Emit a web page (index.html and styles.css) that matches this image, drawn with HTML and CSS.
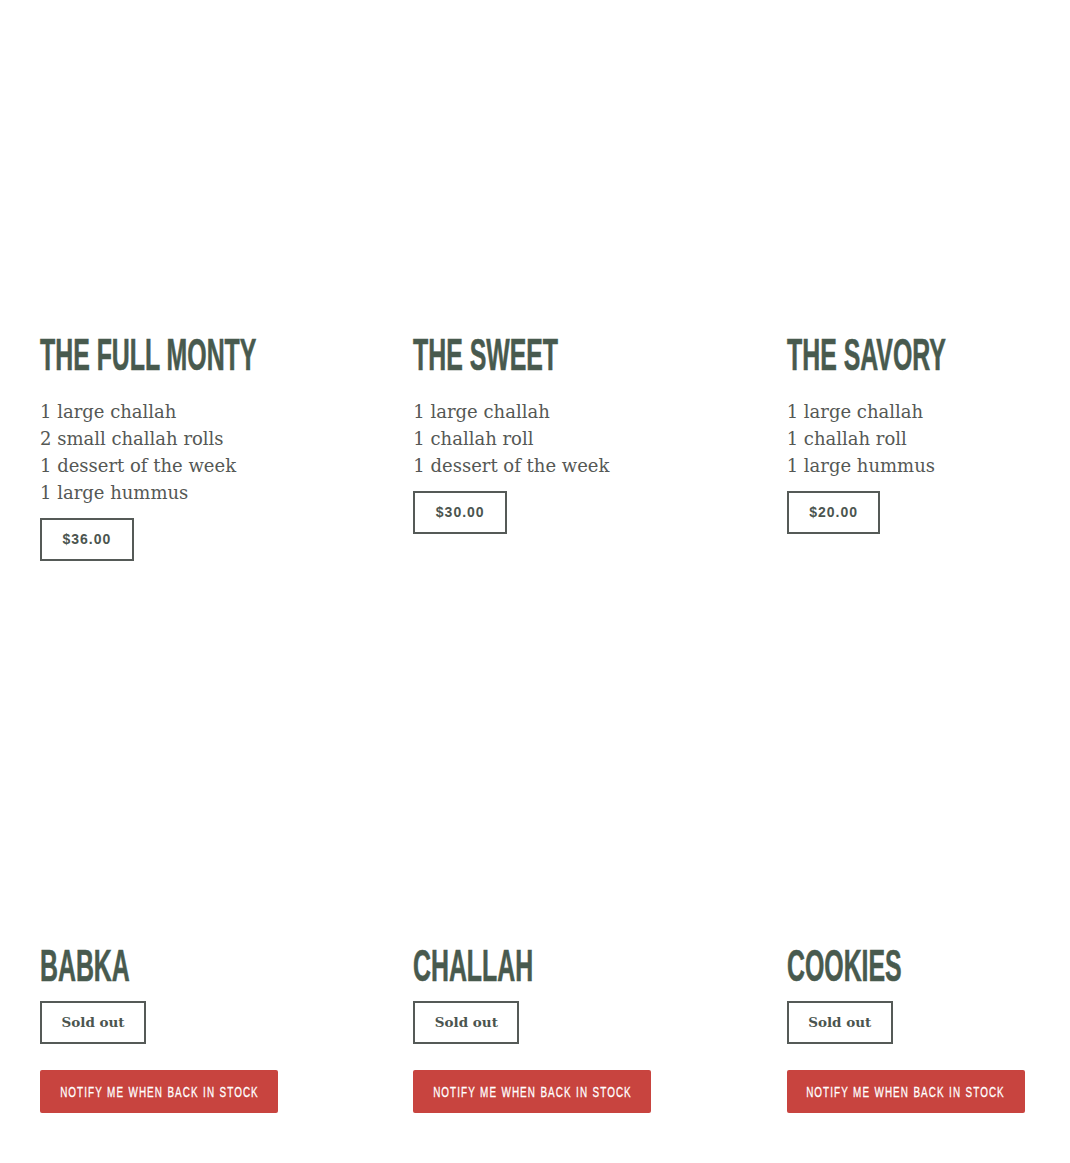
FILE: index.html
```html
<!DOCTYPE html>
<html lang="en">
<head>
<meta charset="utf-8">
<title>Bundles</title>
<link rel="stylesheet" href="styles.css">
</head>
<body>
<main class="grid">
  <article class="card">
    <div class="media"></div>
    <h2 class="title"><span>THE FULL MONTY</span></h2>
    <div class="desc">
      <p>1 large challah</p>
      <p>2 small challah rolls</p>
      <p>1 dessert of the week</p>
      <p>1 large hummus</p>
    </div>
    <button class="price">$36.00</button>
  </article>
  <article class="card">
    <div class="media"></div>
    <h2 class="title"><span>THE SWEET</span></h2>
    <div class="desc">
      <p>1 large challah</p>
      <p>1 challah roll</p>
      <p>1 dessert of the week</p>
    </div>
    <button class="price">$30.00</button>
  </article>
  <article class="card">
    <div class="media"></div>
    <h2 class="title"><span>THE SAVORY</span></h2>
    <div class="desc">
      <p>1 large challah</p>
      <p>1 challah roll</p>
      <p>1 large hummus</p>
    </div>
    <button class="price">$20.00</button>
  </article>

  <article class="card">
    <div class="media"></div>
    <h2 class="title"><span>BABKA</span></h2>
    <button class="soldout">Sold out</button>
    <button class="notify"><span>NOTIFY ME WHEN BACK IN STOCK</span></button>
  </article>
  <article class="card">
    <div class="media"></div>
    <h2 class="title"><span>CHALLAH</span></h2>
    <button class="soldout">Sold out</button>
    <button class="notify"><span>NOTIFY ME WHEN BACK IN STOCK</span></button>
  </article>
  <article class="card">
    <div class="media"></div>
    <h2 class="title"><span>COOKIES</span></h2>
    <button class="soldout">Sold out</button>
    <button class="notify"><span>NOTIFY ME WHEN BACK IN STOCK</span></button>
  </article>
</main>
</body>
</html>
```
FILE: styles.css
```css
html, body {
  margin: 0;
  padding: 0;
  background: #ffffff;
  overflow: hidden;
}

.grid {
  display: grid;
  grid-template-columns: 373.33px 373.33px 1fr;
  row-gap: 50px;
  padding-left: 40px;
  align-items: start;
}

.card {
  display: flex;
  flex-direction: column;
  align-items: flex-start;
}

.media {
  height: 309px;
  width: 100%;
  margin-bottom: 20px;
}

.title {
  margin: 0 0 8px;
  font-family: "Liberation Sans", Arial, sans-serif;
  font-weight: 700;
  font-size: 44px;
  line-height: 52.8px;
  color: #485a4e;
  white-space: nowrap;
}

.title span {
  display: inline-block;
  transform: scaleX(0.565);
  transform-origin: left center;
  -webkit-text-stroke: 0.6px #485a4e;
}

.desc {
  margin: 8px 0 12px;
  font-family: "DejaVu Serif", serif;
  font-size: 18px;
  line-height: 27px;
  color: #555855;
}

.desc p {
  margin: 0;
}

.price {
  height: 43px;
  box-sizing: border-box;
  padding: 0 20.5px;
  border: 2px solid #555a57;
  background: #fff;
  font-family: "Liberation Sans", Arial, sans-serif;
  font-weight: 700;
  font-size: 14px;
  letter-spacing: 1px;
  color: #4b554f;
  border-radius: 0;
}

.soldout {
  height: 43px;
  box-sizing: border-box;
  padding: 0 19.5px;
  border: 2px solid #555a57;
  background: #fff;
  font-family: "DejaVu Serif", serif;
  font-weight: 700;
  font-size: 13.5px;
  color: #4b554f;
  border-radius: 0;
}

.notify {
  margin-top: 26px;
  width: 238px;
  height: 43px;
  box-sizing: border-box;
  border: none;
  border-radius: 2px;
  background: #c8443f;
  color: #ffffff;
  display: flex;
  align-items: center;
  justify-content: center;
  padding: 0;
  overflow: visible;
}

.notify span {
  display: inline-block;
  white-space: nowrap;
  font-family: "Liberation Sans", Arial, sans-serif;
  font-size: 15px;
  letter-spacing: 1.6px;
  word-spacing: 1px;
  transform: scaleX(0.66);
  transform-origin: center;
  -webkit-text-stroke: 0.3px #ffffff;
}
```
